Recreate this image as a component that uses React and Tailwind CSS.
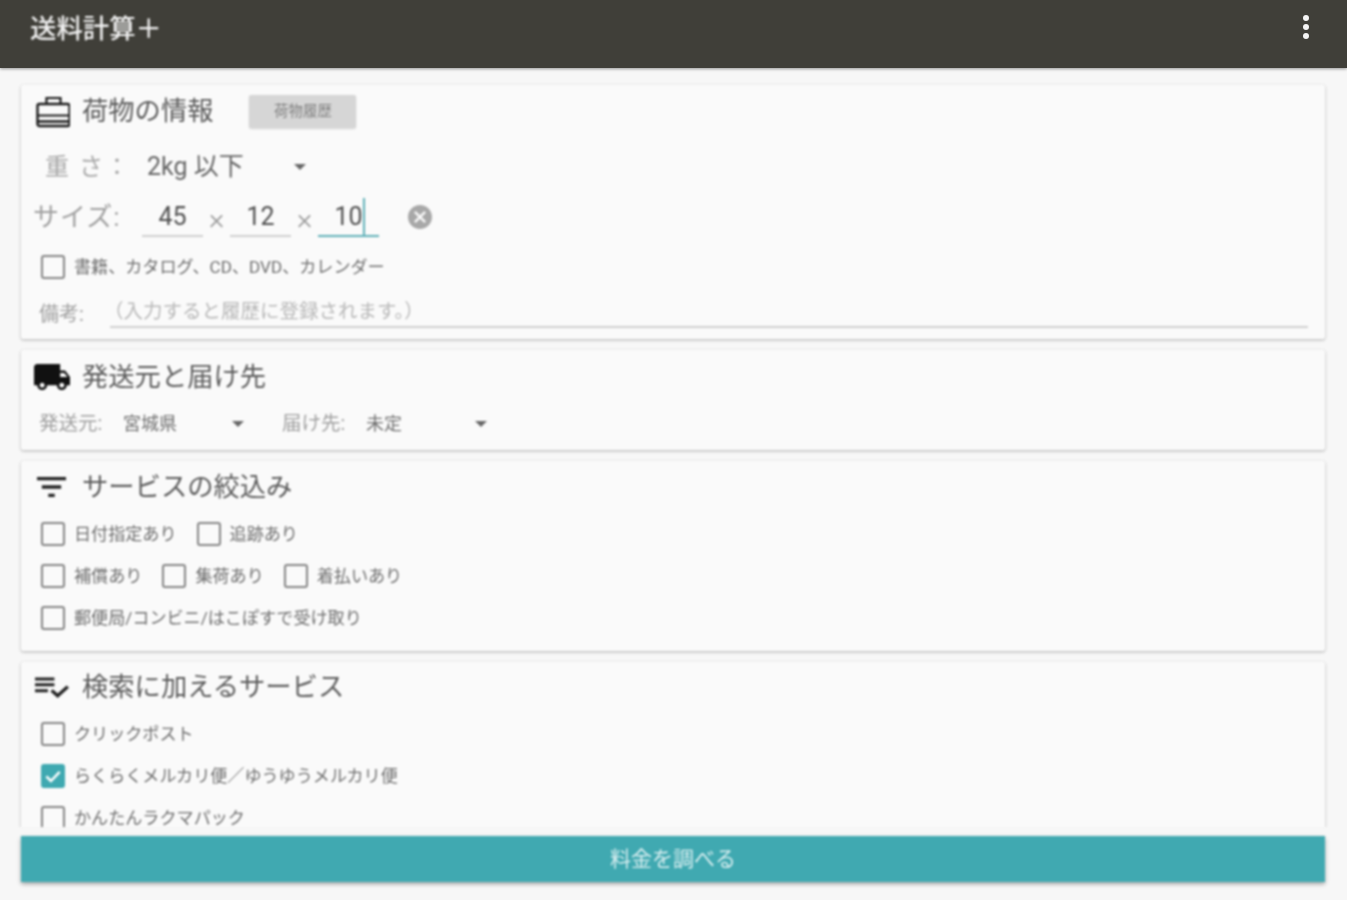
const font = { fontFamily: '"Roboto","Noto Sans CJK JP",sans-serif' };

function Card({ className = "", children }) {
  return (
    <section className={"shrink-0 rounded-[2px] bg-[#fafafa] shadow-[0_1px_3px_rgba(0,0,0,0.3)] " + className}>
      {children}
    </section>
  );
}

function Heading({ icon, children, extra }) {
  return (
    <div className="flex items-center">
      <div className="flex h-[36px] w-[36px] items-center justify-center">{icon}</div>
      <h2 className="ml-[14px] text-[26.3px] leading-[36px] font-normal text-[#5c5c5c] whitespace-nowrap">{children}</h2>
      {extra}
    </div>
  );
}

function Check({ label, checked }) {
  return (
    <label className="flex items-center whitespace-nowrap">
      <span
        className={
          "flex h-[24px] w-[24px] shrink-0 items-center justify-center rounded-[3px] border-2 " +
          (checked ? "border-[#3fa9b1] bg-[#3fa9b1]" : "border-[#858585] bg-transparent")
        }
      >
        {checked && (
          <svg viewBox="0 0 24 24" className="h-[20px] w-[20px]" fill="none" stroke="#ffffff" strokeWidth="3">
            <path d="M4 12.5l5.5 5.5L20 7" />
          </svg>
        )}
      </span>
      <span className="ml-[9px] text-[17.1px] leading-[24px] text-[#6e6e6e]">{label}</span>
    </label>
  );
}

function Caret({ className = "" }) {
  return <span className={"h-0 w-0 border-x-[6px] border-t-[6px] border-x-transparent border-t-[#666666] " + className} />;
}

function SizeInput({ value, active }) {
  return (
    <div
      className={
        "relative flex h-[40px] w-[61px] items-center justify-center border-b-2 pt-[2px] text-[25px] text-[#4f4f4f] " +
        (active ? "border-[#5fb0b8]" : "border-[#cfcfcf]")
      }
    >
      <span className={active ? "border-r-2 border-[#5fb0b8] pl-[2px] leading-[38px]" : ""}>{value}</span>
    </div>
  );
}

function Times() {
  return <span className="w-[27px] pt-[3px] text-center text-[30px] leading-[40px] font-light text-[#9a9a9a]">×</span>;
}

function Sel({ label, value, labelW, w }) {
  return (
    <div className="flex items-center text-[18px] leading-[24px]">
      <span className={"text-[19.5px] whitespace-nowrap text-[#a0a0a0] " + labelW}>{label}</span>
      <span className="text-[#707070]">{value}</span>
      <Caret className={w} />
    </div>
  );
}

export default function App() {
  return (
    <div style={font} className="flex h-[900px] w-[1347px] flex-col overflow-hidden bg-[#f7f7f7]">
      <header className="relative z-10 flex h-[68px] shrink-0 items-center justify-between bg-[#403f39] pb-[9px] pl-[30px] pr-[35px] shadow-[0_1px_3px_rgba(0,0,0,0.4)]">
        <h1 className="text-[26.4px] font-medium text-[#f2f2f2] blur-[0.9px]">送料計算＋</h1>
        <svg viewBox="0 0 12 28" className="mb-[5px] h-[28px] w-[12px] blur-[0.6px]" fill="#f5f5f5">
          <circle cx="6" cy="5" r="3" />
          <circle cx="6" cy="14" r="3" />
          <circle cx="6" cy="23" r="3" />
        </svg>
      </header>

      <main className="flex min-h-0 flex-1 flex-col gap-[11px] overflow-hidden pl-[21px] pr-[22px] pt-[17px] blur-[0.9px]">
        <Card className="h-[254px] pl-[11px] pr-[17px] pt-[8px]">
          <Heading
            icon={
              <svg viewBox="0 0 36 36" className="ml-[3px] h-[36px] w-[36px] shrink-0" fill="none" stroke="#1a1a1a" strokeWidth="2.4">
                <rect x="3.5" y="11" width="32" height="22" rx="2" />
                <path d="M12.5 10.5V5h14v5.5" strokeWidth="2.2" />
                <path d="M3.5 22.5h32" strokeWidth="2" />
                <path d="M3.5 28.5h32" strokeWidth="2.4" />
              </svg>
            }
            extra={
              <button className="ml-[36px] h-[33px] w-[107px] rounded-[2px] bg-[#d6d6d6] pt-[2px] text-[14.5px] text-[#808080] shadow-[0_1px_2px_rgba(0,0,0,0.15)]">
                荷物履歴
              </button>
            }
          >
            荷物の情報
          </Heading>

          <div className="mt-[18px] flex h-[40px] items-center pl-[13px]">
            <span className="w-[102px] text-[24px] tracking-[2px] text-[#a8a8a8] whitespace-nowrap">重 さ：</span>
            <span className="w-[147px] text-[25px] text-[#666666]">2kg 以下</span>
            <Caret />
          </div>

          <div className="mt-[10px] flex h-[40px] items-center">
            <span className="mr-[20px] ml-[1px] w-[89px] text-[26px] tracking-[1px] text-[#a0a0a0] whitespace-nowrap">サイズ:</span>
            <SizeInput value="45" />
            <Times />
            <SizeInput value="12" />
            <Times />
            <SizeInput value="10" active />
            <svg viewBox="2 2 20 20" className="ml-[29px] h-[24px] w-[24px]" fill="#a8a8a8">
              <path d="M12 2C6.47 2 2 6.47 2 12s4.47 10 10 10 10-4.47 10-10S17.53 2 12 2zm5 13.59L15.59 17 12 13.41 8.41 17 7 15.59 10.59 12 7 8.41 8.41 7 12 10.59 15.59 7 17 8.41 13.41 12 17 15.59z" />
            </svg>
          </div>

          <div className="mt-[18px] ml-[9px]">
            <Check label="書籍、カタログ、CD、DVD、カレンダー" />
          </div>

          <div className="mt-[20px] flex items-end pl-[7px]">
            <span className="w-[71px] pb-[1px] text-[20px] leading-[26px] whitespace-nowrap text-[#a0a0a0]">備考:</span>
            <div className="flex-1 border-b-2 border-[#d0d0d0] pb-[1px] indent-[-6px] text-[19.5px] leading-[26px] whitespace-nowrap text-[#b8b8b8]">
              （入力すると履歴に登録されます。）
            </div>
          </div>
        </Card>

        <Card className="h-[100px] pl-[11px] pt-[9px]">
          <Heading
            icon={
              <svg viewBox="1 4 22 16" className="ml-[3px] h-[26px] w-[36px] shrink-0" fill="#111111" preserveAspectRatio="none">
                <path d="M20 8h-3V4H3c-1.1 0-2 .9-2 2v11h2c0 1.66 1.34 3 3 3s3-1.34 3-3h6c0 1.66 1.34 3 3 3s3-1.34 3-3h2v-5l-3-4zM6 18.5c-.83 0-1.5-.67-1.5-1.5s.67-1.5 1.5-1.5 1.5.67 1.5 1.5-.67 1.5-1.5 1.5zm13.5-9l1.96 2.5H17V9.5h2.5zm-1.5 9c-.83 0-1.5-.67-1.5-1.5s.67-1.5 1.5-1.5 1.5.67 1.5 1.5-.67 1.5-1.5 1.5z" />
              </svg>
            }
          >
            発送元と届け先
          </Heading>
          <div className="mt-[17px] flex items-center pl-[7px]">
            <Sel label="発送元:" labelW="w-[84px]" value="宮城県" w="ml-[55px]" />
            <div className="ml-[38px]">
              <Sel label="届け先:" labelW="w-[84px]" value="未定" w="ml-[73px]" />
            </div>
          </div>
        </Card>

        <Card className="h-[190px] pl-[11px] pt-[8px]">
          <Heading
            icon={
              <svg viewBox="3 6 18 12" className="ml-[3px] h-[20px] w-[29px] shrink-0" fill="#222222" preserveAspectRatio="none">
                <path d="M10 18h4v-2h-4v2zM3 6v2h18V6H3zm3 7h12v-2H6v2z" />
              </svg>
            }
          >
            サービスの絞込み
          </Heading>
          <div className="mt-[17px] flex flex-col gap-[18px] pl-[9px]">
            <div className="flex gap-[20px]">
              <Check label="日付指定あり" />
              <Check label="追跡あり" />
            </div>
            <div className="flex gap-[20px]">
              <Check label="補償あり" />
              <Check label="集荷あり" />
              <Check label="着払いあり" />
            </div>
            <Check label="郵便局/コンビニ/はこぽすで受け取り" />
          </div>
        </Card>

        <Card className="h-[200px] pl-[11px] pt-[7px]">
          <Heading
            icon={
              <svg viewBox="2 5 21 15" className="ml-[4px] h-[22px] w-[34px] shrink-0" fill="#222222" preserveAspectRatio="none">
                <path d="M14 10H2v2h12v-2zm0-4H2v2h12V6zM2 16h8v-2H2v2zm19.5-4.5L23 13l-6.99 7-4.51-4.5L13 14l3.01 3 5.49-5.5z" />
              </svg>
            }
          >
            検索に加えるサービス
          </Heading>
          <div className="mt-[17px] flex flex-col gap-[18px] pl-[9px]">
            <Check label="クリックポスト" />
            <Check label="らくらくメルカリ便／ゆうゆうメルカリ便" checked />
            <Check label="かんたんラクマパック" />
          </div>
        </Card>
      </main>

      <div className="shrink-0 pl-[21px] pr-[22px] pb-[18px] pt-[9px] blur-[0.9px]">
        <button className="h-[46px] w-full bg-[#40a9b1] pt-[2px] text-[21px] text-[#d8eef0] shadow-[0_2px_4px_rgba(0,0,0,0.35)]">
          料金を調べる
        </button>
      </div>
    </div>
  );
}
